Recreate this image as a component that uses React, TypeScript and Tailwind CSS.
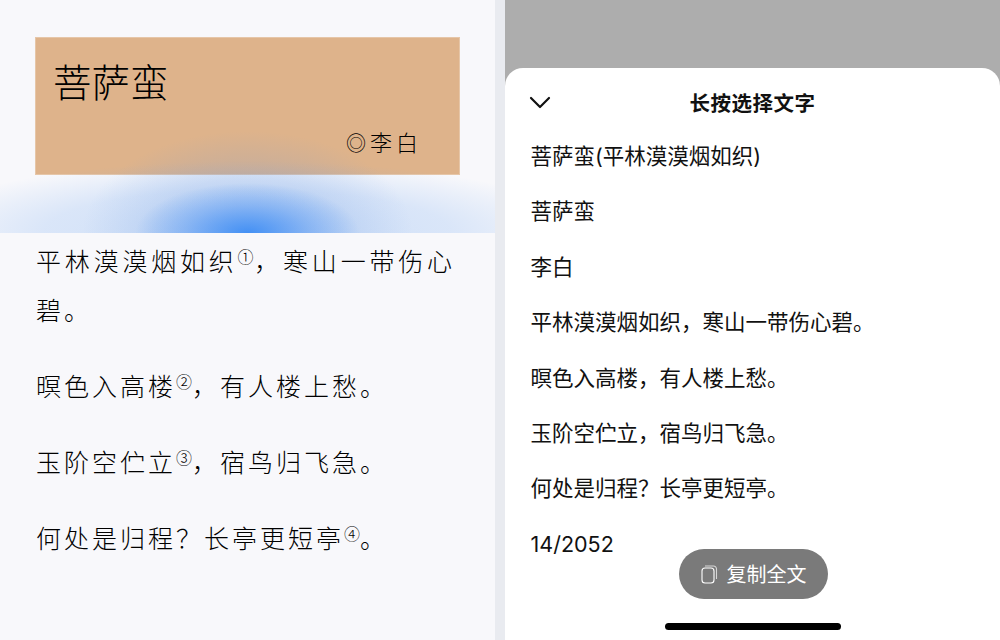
export default function App() {
  const sans = { fontFamily: '"Noto Sans CJK SC", sans-serif' };
  const latin = { fontFamily: 'Inter, "Noto Sans CJK SC", sans-serif' };
  const poem = [
    { t: "平林漠漠烟如织", n: "①", r: "，寒山一带伤心碧。" },
    { t: "暝色入高楼", n: "②", r: "，有人楼上愁。" },
    { t: "玉阶空伫立", n: "③", r: "，宿鸟归飞急。" },
    { t: "何处是归程？长亭更短亭", n: "④", r: "。" },
  ];
  const items = [
    "菩萨蛮(平林漠漠烟如织)",
    "菩萨蛮",
    "李白",
    "平林漠漠烟如织，寒山一带伤心碧。",
    "暝色入高楼，有人楼上愁。",
    "玉阶空伫立，宿鸟归飞急。",
    "何处是归程？长亭更短亭。",
    "14/2052",
  ];
  return (
    <div className="flex h-[640px] w-[1000px] overflow-hidden bg-[#e9ebf0]" style={sans}>
      <div className="h-full w-[495px] bg-[#f8f8fb] text-black">
        <div className="relative h-[233px] overflow-hidden px-[35px] pt-[37px]">
          <div className="flex h-[138px] flex-col justify-between border border-[#e6c6a8] bg-[#deb38b] pb-[16px] pl-[17px] pr-[37px] pt-[17px]">
            <div className="text-[38.5px] font-light leading-[50px]">菩萨蛮</div>
            <div className="self-end text-[22px] font-light leading-[30px] tracking-[4px]">
              <span className="text-[20px] tracking-[4px]">◎</span>李白
            </div>
          </div>
          <div className="pointer-events-none absolute inset-x-0 bottom-0 h-[110px] bg-[radial-gradient(ellipse_112px_50px_at_50%_100%,rgba(50,135,245,0.85),rgba(80,150,245,0.45)_55%,rgba(90,155,245,0)_100%),radial-gradient(ellipse_165px_102px_at_50%_100%,rgba(100,150,225,0.34),rgba(100,150,225,0.2)_55%,rgba(100,150,225,0)_100%),radial-gradient(ellipse_340px_72px_at_50%_100%,rgba(110,165,240,0.32),rgba(110,165,240,0.22)_60%,rgba(110,165,240,0)_100%)]" />
        </div>
        <div className="pl-[36px] pr-[40px] pt-[3px]">
          {poem.map((p, i) => (
            <p key={i} className="mb-[27px] text-justify text-[25px] font-light leading-[49px] tracking-[3px]">
              {p.t}
              <sup className="text-[16px] font-light leading-none tracking-normal">{p.n}</sup>
              {p.r}
            </p>
          ))}
        </div>
      </div>
      <div className="ml-[10px] flex h-full w-[495px] flex-col bg-[#adadad] pt-[68px]">
        <div className="relative flex-1 rounded-t-[18px] bg-white text-[#111]">
          <div className="relative flex h-[70px] items-center justify-center pb-[2px]">
            <svg className="absolute left-[24px] top-[28px]" width="22" height="14" viewBox="0 0 22 14" fill="none" stroke="#111" strokeWidth="2.2" strokeLinecap="round" strokeLinejoin="round">
              <path d="M2 2l9 9 9-9" />
            </svg>
            <div className="text-[20.5px] font-bold leading-[26px] tracking-[0.5px]">长按选择文字</div>
          </div>
          <div className="pl-[25.5px] pt-[3px]" style={latin}>
            {items.map((s) => (
              <div key={s} className="h-[55.4px] text-[21.5px] font-normal leading-[30px]">{s}</div>
            ))}
          </div>
          <div className="absolute left-[174px] top-[481px] flex h-[50px] w-[149px] items-center justify-center gap-[9px] rounded-full bg-[#7a7a7a] text-white">
            <svg width="17" height="19" viewBox="0 0 17 19" fill="none" stroke="#fff" strokeWidth="1.1">
              <rect x="1" y="3" width="12" height="15" rx="3" />
              <path d="M4 1h8.5A3 3 0 0 1 15.5 4v10" strokeOpacity="0.7" />
            </svg>
            <span className="text-[20px] font-normal leading-[28px]">复制全文</span>
          </div>
          <div className="absolute left-[160px] top-[555px] h-[7px] w-[176px] rounded-full bg-black" />
        </div>
      </div>
    </div>
  );
}
